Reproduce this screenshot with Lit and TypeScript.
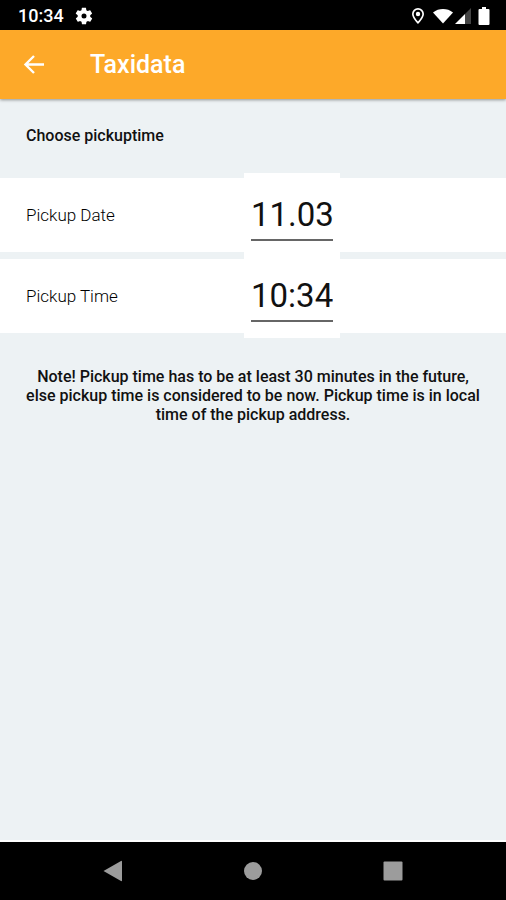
import { LitElement, html, css } from "lit";
import { customElement, property, state } from "lit/decorators.js";

@customElement("status-bar")
class StatusBar extends LitElement {
  static styles = css`
    :host {
      display: flex;
      align-items: center;
      justify-content: space-between;
      height: 30px;
      padding: 2px 16px 0 18px;
      box-sizing: border-box;
      background: #000;
      color: #fff;
      font-size: 18px;
      line-height: 20px;
      font-weight: 500;
    }
    .left,
    .right {
      display: flex;
      align-items: center;
    }
    .left {
      gap: 10px;
    }
    .right {
      gap: 2px;
    }
    svg {
      display: block;
      fill: #fff;
    }
    .pin {
      margin-right: 6px;
    }
    .battery {
      margin-left: 5px;
    }
    .weak {
      fill: #444;
    }
  `;

  render() {
    return html`
      <div class="left">
        <span>10:34</span>
        <svg width="20" height="20" viewBox="0 0 24 24" aria-hidden="true">
          <path
            fill-rule="evenodd"
            d="M19.4 13c0-.3.1-.6.1-1s0-.7-.1-1l2.100-1.600c.2-.2.2-.4.100-.6l-2-3.500c-.1-.2-.4-.3-.6-.2l-2.500 1c-.5-.4-1.100-.7-1.700-1l-.4-2.600c0-.3-.2-.5-.5-.5h-4c-.2 0-.4.2-.5.400l-.4 2.700c-.6.2-1.100.6-1.700 1l-2.500-1c-.2-.1-.5 0-.6.2l-2 3.500c-.1.2-.1.500.1.600L4.500 11c0 .3-.1.7-.1 1s0 .7.100 1l-2.100 1.600c-.2.200-.2.400-.1.600l2 3.500c.1.2.400.300.6.200l2.500-1c.5.400 1.100.7 1.700 1l.4 2.600c0 .3.2.5.5.5h4c.2 0 .5-.2.500-.4l.4-2.700c.6-.2 1.200-.6 1.700-1l2.500 1c.2.1.500 0 .6-.2l2-3.500c.1-.2.100-.5-.1-.6zM12 15a3 3 0 1 1 0-6 3 3 0 0 1 0 6z"
          />
        </svg>
      </div>
      <div class="right">
        <svg class="pin" width="14" height="18" viewBox="0 0 14 18" aria-hidden="true">
          <path
            fill-rule="evenodd"
            d="M7 1a6 6 0 0 0-6 6c0 4 6 10 6 10s6-6 6-10a6 6 0 0 0-6-6zM7 2.700a4.300 4.300 0 0 1 4.300 4.300c0 2.300-2.700 5.800-4.300 7.600C5.400 12.800 2.700 9.300 2.700 7A4.300 4.300 0 0 1 7 2.700z"
          />
          <circle cx="7" cy="7" r="2.200" />
        </svg>
        <svg width="20" height="16" viewBox="0 0 20 16" aria-hidden="true">
          <path d="M0 4.500C3 2 6.300 1 10 1s7 1 10 3.500L10 15.500z" />
        </svg>
        <svg width="16" height="16" viewBox="0 0 16 16" aria-hidden="true">
          <path class="weak" d="M16 0v16H10V6z" />
          <path d="M10 6v10H0z" />
        </svg>
        <svg class="battery" width="12" height="18" viewBox="0 0 12 18" aria-hidden="true">
          <path d="M4 0h4v2h2.500q1 0 1 1v14q0 1-1 1h-9q-1 0-1-1V3q0-1 1-1H4z" />
        </svg>
      </div>
    `;
  }
}

@customElement("pickup-field")
class PickupField extends LitElement {
  @property() label = "";
  @property() value = "";

  static styles = css`
    :host {
      display: grid;
      grid-template-columns: 218px 96px;
      align-items: center;
      height: 74px;
      padding-left: 26px;
      background: #fff;
    }
    label {
      font-size: 17px;
      line-height: 20px;
      font-weight: 300;
      color: #000;
    }
    .box {
      height: 84px;
      margin: -5px 0;
      padding: 17px 7px 0;
      box-sizing: border-box;
      background: #fff;
    }
    input {
      display: block;
      width: 100%;
      height: 51px;
      box-sizing: border-box;
      padding: 0;
      border: 0;
      border-bottom: 2px solid #666;
      border-radius: 0;
      background: none;
      outline: none;
      color: #111;
      font: 400 33px/49px Roboto, sans-serif;
    }
  `;

  render() {
    return html`
      <label for="field">${this.label}</label>
      <div class="box">
        <input id="field" type="text" .value=${this.value} />
      </div>
    `;
  }
}

@customElement("app-root")
class AppRoot extends LitElement {
  @state() private fields = [
    { label: "Pickup Date", value: "11.03" },
    { label: "Pickup Time", value: "10:34" },
  ];

  static styles = css`
    :host {
      display: flex;
      flex-direction: column;
      min-height: 100vh;
      background: #edf2f4;
      color: #111;
      font-family: Roboto, sans-serif;
    }
    .appbar {
      display: flex;
      align-items: center;
      gap: 44px;
      height: 69px;
      padding: 0 22px;
      background: #fda929;
      color: #fff;
      box-shadow: 0 1px 3px #0006;
    }
    button {
      display: block;
      padding: 0;
      border: 0;
      background: none;
      cursor: pointer;
    }
    svg {
      display: block;
    }
    h1 {
      margin: 0;
      font-size: 25px;
      line-height: 32px;
      font-weight: 500;
    }
    main {
      flex: 1;
      border-bottom: 2px solid #fff;
    }
    h2 {
      margin: 0;
      padding: 27px 26px 32px;
      font-size: 16px;
      line-height: 20px;
      font-weight: 500;
    }
    .fields {
      display: grid;
      gap: 7px;
    }
    .note {
      margin: 0;
      padding: 34px 26px;
      font-size: 16px;
      line-height: 19px;
      font-weight: 500;
      text-align: center;
    }
    .navbar {
      display: flex;
      justify-content: center;
      gap: 120px;
      height: 58px;
      align-items: center;
      background: #000;
    }
    .navbar svg {
      fill: #9c9c9c;
    }
  `;

  render() {
    return html`
      <status-bar></status-bar>
      <header class="appbar">
        <button aria-label="Back">
          <svg width="24" height="24" viewBox="0 0 24 24">
            <path
              d="M22 11.500H4M12 3L3.500 11.500L12 20"
              fill="none"
              stroke="#fff"
              stroke-width="2.400"
            />
          </svg>
        </button>
        <h1>Taxidata</h1>
      </header>
      <main>
        <h2>Choose pickuptime</h2>
        <div class="fields">
          ${this.fields.map(
            (f) => html`<pickup-field .label=${f.label} .value=${f.value}></pickup-field>`
          )}
        </div>
        <p class="note">
          Note! Pickup time has to be at least 30 minutes in the future, else pickup time is
          considered to be now. Pickup time is in local time of the pickup address.
        </p>
      </main>
      <nav class="navbar">
        <button aria-label="Back">
          <svg width="20" height="22" viewBox="0 0 20 22"><path d="M0.500 11L18 1q1-.5 1 .5v19q0 1-1 .5z" /></svg>
        </button>
        <button aria-label="Home">
          <svg width="20" height="20" viewBox="0 0 20 20"><circle cx="10" cy="10" r="9" /></svg>
        </button>
        <button aria-label="Recent apps">
          <svg width="20" height="20" viewBox="0 0 20 20">
            <rect x="0.500" y="0.500" width="19" height="19" rx="1" />
          </svg>
        </button>
      </nav>
    `;
  }
}
